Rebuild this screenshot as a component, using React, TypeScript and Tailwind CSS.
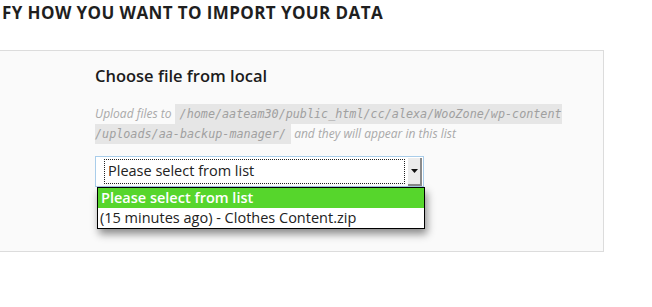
export default function App() {
  return (
    <div className="h-[307px] w-[652px] overflow-hidden bg-white font-['Open_Sans',sans-serif] text-[#222]">
      <h2 className="pl-[2px] pt-[2px] text-[17px] font-bold leading-[22px] tracking-[0.4px] text-[#1f1f1f]">
        FY HOW YOU WANT TO IMPORT YOUR DATA
      </h2>

      <div className="ml-[-10px] mt-[26px] h-[202px] w-[614px] border border-[#dcdcdc] bg-[#fafafa] pl-[104px] pt-[14px]">
        <h3 className="text-[16.5px] font-semibold leading-[22px] text-[#1c1c1c]">Choose file from local</h3>

        <p className="mt-[17px] w-[480px] text-[12px] italic leading-[20px] text-[#a9a9a9]">
          Upload files to{' '}
          <code className="bg-[#e6e6e6] px-[5px] py-[3px] font-['DejaVu_Sans_Mono',monospace] text-[11.75px] italic text-[#a0a0a0] [box-decoration-break:slice]">
            /home/aateam30/public_html/cc/alexa/WooZone/wp-content
            <br />
            /uploads/aa-backup-manager/
          </code>{' '}
          and they will appear in this list
        </p>

        <div className="relative mt-[12px] w-[329px]">
          <div className="flex h-[31px] items-center border border-[#a9cdea] bg-white pl-[8px]">
            <div className="flex h-[25px] w-[301px] items-center border border-dotted border-[#222] pl-[3px] text-[14.5px] leading-none text-[#222]">
              Please select from list
            </div>
            <div className="ml-[3px] flex h-[28px] w-[14px] items-center justify-center border-b-2 border-r-2 border-[#8a8a8a] bg-[#ececec]">
              <svg width="7" height="4" viewBox="0 0 7 4">
                <path d="M0 0h7L3.5 4z" fill="#111" />
              </svg>
            </div>
          </div>

          <div className="absolute left-[2px] top-[31px] w-[328px] border border-black bg-white text-[14.5px] shadow-[2px_5px_8px_rgba(0,0,0,0.45)]">
            <div className="flex h-[20px] items-center bg-[#56d62c] pl-[3px] font-semibold text-white">
              Please select from list
            </div>
            <div className="flex h-[20px] items-center pl-[2px] text-[#222]">
              (15 minutes ago) - Clothes Content.zip
            </div>
          </div>
        </div>
      </div>
    </div>
  );
}
